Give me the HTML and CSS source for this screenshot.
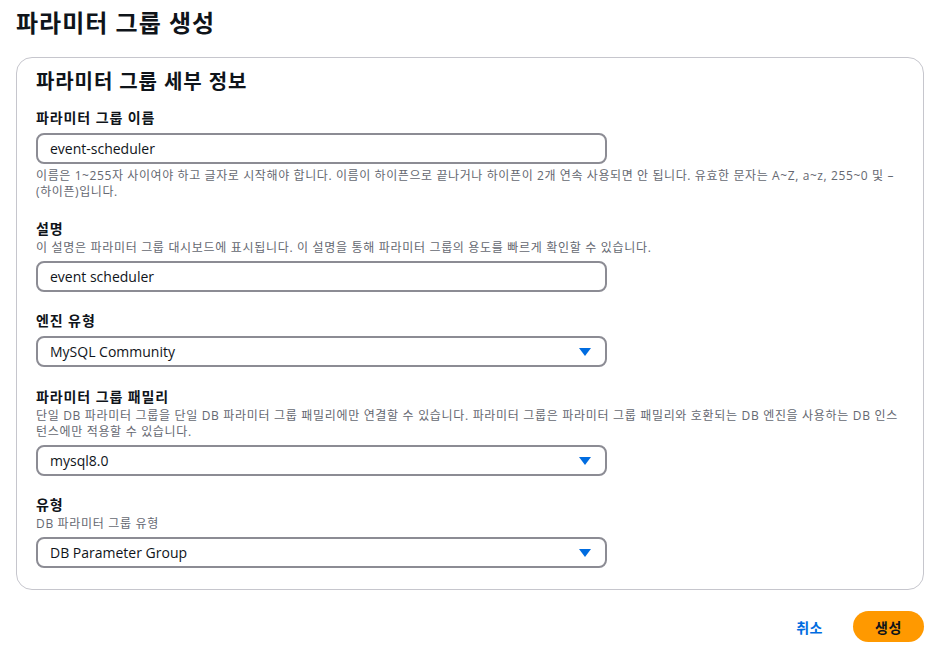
FILE: index.html
```html
<!DOCTYPE html>
<html lang="ko">
<head>
  <meta charset="utf-8">
  <title>파라미터 그룹 생성</title>
  <link rel="stylesheet" href="styles.css">
</head>
<body>
  <div class="page">
    <h1 class="page-title">파라미터 그룹 생성</h1>

    <div class="container">
      <h2 class="container-title">파라미터 그룹 세부 정보</h2>

      <!-- 이름 -->
      <div class="field">
        <label class="field-label">파라미터 그룹 이름</label>
        <div class="input">event-scheduler</div>
        <div class="constraint">
          이름은 1~255자 사이여야 하고 글자로 시작해야 합니다. 이름이 하이픈으로 끝나거나 하이픈이 2개 연속 사용되면 안 됩니다. 유효한 문자는 A~Z, a~z, 255~0 및 –<wbr>(하이픈)입니다.
        </div>
      </div>

      <!-- 설명 -->
      <div class="field">
        <label class="field-label">설명</label>
        <div class="description">이 설명은 파라미터 그룹 대시보드에 표시됩니다. 이 설명을 통해 파라미터 그룹의 용도를 빠르게 확인할 수 있습니다.</div>
        <div class="input">event scheduler</div>
      </div>

      <!-- 엔진 유형 -->
      <div class="field">
        <label class="field-label">엔진 유형</label>
        <div class="input select">
          <span>MySQL Community</span>
          <svg class="caret" width="12" height="8" viewBox="0 0 12 8"><path d="M0 0h12L6 8z" fill="#006ce0"/></svg>
        </div>
      </div>

      <!-- 패밀리 -->
      <div class="field">
        <label class="field-label">파라미터 그룹 패밀리</label>
        <div class="description">단일 DB 파라미터 그룹을 단일 DB 파라미터 그룹 패밀리에만 연결할 수 있습니다. 파라미터 그룹은 파라미터 그룹 패밀리와 호환되는 DB 엔진을 사용하는 DB 인스턴스에만 적용할 수 있습니다.</div>
        <div class="input select">
          <span>mysql8.0</span>
          <svg class="caret" width="12" height="8" viewBox="0 0 12 8"><path d="M0 0h12L6 8z" fill="#006ce0"/></svg>
        </div>
      </div>

      <!-- 유형 -->
      <div class="field">
        <label class="field-label">유형</label>
        <div class="description">DB 파라미터 그룹 유형</div>
        <div class="input select">
          <span>DB Parameter Group</span>
          <svg class="caret" width="12" height="8" viewBox="0 0 12 8"><path d="M0 0h12L6 8z" fill="#006ce0"/></svg>
        </div>
      </div>
    </div>

    <div class="actions">
      <button class="btn-link">취소</button>
      <button class="btn-primary">생성</button>
    </div>
  </div>
</body>
</html>
```

FILE: styles.css
```css
* { box-sizing: border-box; }

body {
  margin: 0;
  font-family: "Open Sans", "Noto Sans CJK KR", sans-serif;
  color: #0f141a;
  background: #fff;
}

.page {
  padding: 7px 13px 0 16px;
}

.page-title {
  margin: 0;
  font-size: 24px;
  line-height: 32px;
  font-weight: 700;
  letter-spacing: 1px;
}

.container {
  margin-top: 18px;
  border: 1px solid #c6c6cd;
  border-radius: 16px;
  padding: 10px 19px 21px;
}

.container-title {
  margin: 0 0 11px 0;
  font-size: 20px;
  line-height: 28px;
  font-weight: 700;
  letter-spacing: 0.9px;
}

.field {
  margin-bottom: 18px;
}

.field:nth-child(4) {
  margin-bottom: 19px;
}

.field:last-child {
  margin-bottom: 0;
}

.field-label {
  display: block;
  font-size: 14px;
  line-height: 22px;
  font-weight: 700;
  letter-spacing: 0.9px;
}

.description {
  font-size: 12px;
  line-height: 16px;
  color: #656871;
  margin-bottom: 5px;
  letter-spacing: 0.68px;
}

.constraint {
  font-size: 12px;
  line-height: 16px;
  color: #656871;
  margin-top: 4px;
  letter-spacing: 0.6px;
}

.input {
  margin-top: 4px;
  width: 571px;
  height: 31px;
  border: 2px solid #8c8c94;
  border-radius: 8px;
  padding: 0 12px;
  font-size: 14px;
  line-height: 27px;
  display: flex;
  align-items: center;
}

.description + .input {
  margin-top: 0;
}

.select {
  justify-content: space-between;
}

.caret {
  margin-right: 2px;
}

.actions {
  display: flex;
  justify-content: flex-end;
  align-items: center;
  gap: 10px;
  margin-top: 21px;
}

button {
  font-family: inherit;
  font-size: 14px;
  font-weight: 700;
  border: none;
  cursor: pointer;
  letter-spacing: 0.5px;
}

.btn-link {
  background: none;
  color: #006ce0;
  padding: 4px 20px;
}

.btn-primary {
  background: #ff9900;
  color: #0f141a;
  height: 31px;
  width: 71px;
  border-radius: 16px;
}
```
